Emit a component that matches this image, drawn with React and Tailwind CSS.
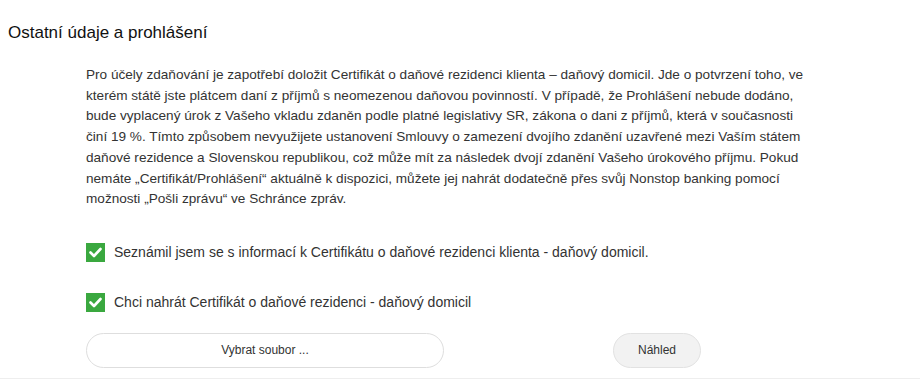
import React from "react";

const lines = [
  "Pro účely zdaňování je zapotřebí doložit Certifikát o daňové rezidenci klienta – daňový domicil. Jde o potvrzení toho, ve",
  "kterém státě jste plátcem daní z příjmů s neomezenou daňovou povinností. V případě, že Prohlášení nebude dodáno,",
  "bude vyplacený úrok z Vašeho vkladu zdaněn podle platné legislativy SR, zákona o dani z příjmů, která v současnosti",
  "činí 19 %. Tímto způsobem nevyužijete ustanovení Smlouvy o zamezení dvojího zdanění uzavřené mezi Vaším státem",
  "daňové rezidence a Slovenskou republikou, což může mít za následek dvojí zdanění Vašeho úrokového příjmu. Pokud",
  "nemáte „Certifikát/Prohlášení“ aktuálně k dispozici, můžete jej nahrát dodatečně přes svůj Nonstop banking pomocí",
  "možnosti „Pošli zprávu“ ve Schránce zpráv.",
];

function Check({ label }) {
  return (
    <label className="flex items-center gap-[9px] cursor-pointer">
      <span className="flex h-[19px] w-[19px] items-center justify-center bg-[#3aa83f]">
        <svg width="13" height="11" viewBox="0 0 13 11" fill="none">
          <path d="M1.5 5.5 L5 9 L11.5 2" stroke="white" strokeWidth="2.6" strokeLinecap="round" strokeLinejoin="round" />
        </svg>
      </span>
      <span className="text-[14px] text-[#333]">{label}</span>
    </label>
  );
}

export default function App() {
  return (
    <div className="w-[920px] h-[379px] bg-white font-['Liberation_Sans',Arial,sans-serif] overflow-hidden">
      <h2 className="pl-[8px] pt-[22px] text-[17px] leading-[22px] text-[#111]">
        Ostatní údaje a prohlášení
      </h2>
      <div className="pl-[86px] pt-[21px]">
        <p className="text-[13.6px] leading-[20.7px] text-[#333]">
          {lines.map((l, i) => (
            <span key={i} className="block whitespace-nowrap">{l}</span>
          ))}
        </p>
        <div className="mt-[32px] flex flex-col gap-[29px]">
          <Check label="Seznámil jsem se s informací k Certifikátu o daňové rezidenci klienta - daňový domicil." />
          <Check label="Chci nahrát Certifikát o daňové rezidenci - daňový domicil" />
        </div>
        <div className="mt-[20px] flex items-center">
          <button className="h-[35px] w-[358px] rounded-full border border-[#dedede] bg-white text-[12px] text-[#333]">
            Vybrat soubor ...
          </button>
          <button className="ml-[169px] h-[35px] w-[88px] rounded-full border border-[#e2e2e2] bg-[#f2f2f2] text-[12px] text-[#333]">
            Náhled
          </button>
        </div>
      </div>
      <div className="mt-[10px] h-px w-full bg-[#eeeeee]" />
    </div>
  );
}
